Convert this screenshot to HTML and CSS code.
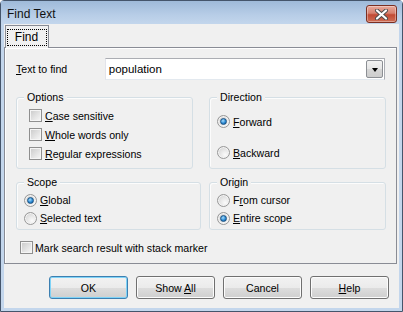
FILE: index.html
```html
<!DOCTYPE html>
<html>
<head>
    <title>Find Text</title>
    <link rel="stylesheet" href="styles.css">
</head>
<body>
    <div class="window">
        <div class="titlebar">
            <span class="title">Find Text</span>
            <button class="close-btn" title="Close">
                <svg width="15" height="11" viewBox="0 0 15 11">
                    <path d="M3 1.5 L12 9.5 M12 1.5 L3 9.5" stroke="#4a4a4a" stroke-width="4" stroke-linecap="round"/>
                    <path d="M3 1.5 L12 9.5 M12 1.5 L3 9.5" stroke="#ffffff" stroke-width="2.2" stroke-linecap="round"/>
                </svg>
            </button>
        </div>

        <div class="client">
            <div class="tabs">
                <div class="tab active"><span class="focus">Find</span></div>
            </div>

            <div class="panel">
                <div class="find-row">
                    <label class="find-label"><u>T</u>ext to find</label>
                    <div class="combo">
                        <span class="combo-text">population</span>
                        <span class="combo-btn"><span class="arrow"></span></span>
                    </div>
                </div>

                <div class="groups top-groups">
                    <div class="group options">
                        <span class="group-title">Options</span>
                        <div class="item"><span class="check"></span><span><u>C</u>ase sensitive</span></div>
                        <div class="item"><span class="check"></span><span><u>W</u>hole words only</span></div>
                        <div class="item"><span class="check"></span><span><u>R</u>egular expressions</span></div>
                    </div>
                    <div class="group direction">
                        <span class="group-title">Direction</span>
                        <div class="item"><span class="radio checked"></span><span><u>F</u>orward</span></div>
                        <div class="item"><span class="radio"></span><span><u>B</u>ackward</span></div>
                    </div>
                </div>

                <div class="groups bottom-groups">
                    <div class="group scope">
                        <span class="group-title">Scope</span>
                        <div class="item"><span class="radio checked"></span><span><u>G</u>lobal</span></div>
                        <div class="item"><span class="radio"></span><span><u>S</u>elected text</span></div>
                    </div>
                    <div class="group origin">
                        <span class="group-title">Origin</span>
                        <div class="item"><span class="radio"></span><span>F<u>r</u>om cursor</span></div>
                        <div class="item"><span class="radio checked"></span><span><u>E</u>ntire scope</span></div>
                    </div>
                </div>

                <div class="item mark"><span class="check"></span><span>Mark search result with stack marker</span></div>
            </div>

            <div class="buttons">
                <button class="btn default">OK</button>
                <button class="btn">Show <u>A</u>ll</button>
                <button class="btn">Cancel</button>
                <button class="btn"><u>H</u>elp</button>
            </div>
        </div>
    </div>
</body>
</html>
```

FILE: styles.css
```css
html, body {
    margin: 0;
    padding: 0;
}
body {
    font-family: "Liberation Sans", Arial, sans-serif;
    font-size: 10.6px;
    color: #000;
    width: 403px;
    height: 312px;
    overflow: hidden;
}
u {
    text-decoration: underline;
    text-underline-offset: 1px;
}

/* window frame */
.window {
    box-sizing: border-box;
    width: 403px;
    height: 312px;
    border: 1px solid #45556b;
    border-radius: 4px 4px 0 0;
    background: #c3d6ec;
    padding: 0 3px 3px 3px;
    display: flex;
    flex-direction: column;
}
.titlebar {
    height: 23px;
    margin: 0 -3px;
    padding: 0 5px 0 6px;
    display: flex;
    align-items: center;
    justify-content: space-between;
    background: linear-gradient(#9fbad9, #b7cde7 60%, #c3d6ec);
}
.title {
    font-size: 12px;
    color: #111;
    padding-top: 3px;
}
.close-btn {
    width: 31px;
    height: 18px;
    margin-top: 3px;
    padding: 0;
    border: 1px solid #7b2f22;
    border-radius: 3px;
    background: linear-gradient(#e9a99b, #d7806e 45%, #c24a34 55%, #cf6e55);
    box-shadow: inset 0 0 0 1px rgba(255,255,255,0.35);
    display: flex;
    align-items: center;
    justify-content: center;
}

/* client area */
.client {
    flex: 1;
    background: #f0f0f0;
    display: flex;
    flex-direction: column;
}
.tabs {
    display: flex;
    padding: 1px 0 0 1px;
}
.tab {
    width: 44px;
    height: 23px;
    box-sizing: border-box;
    border: 1px solid #898c95;
    border-bottom: none;
    background: #f0f0f0;
    margin-bottom: -1px;
    position: relative;
    z-index: 1;
    display: flex;
    align-items: center;
    justify-content: center;
}
.focus {
    outline: 1px dotted #000;
    padding: 1px 8px 1px 7px;
    line-height: 13px;
    font-size: 12px;
}
.panel {
    border: 1px solid #898c95;
    box-shadow: inset 1px 1px 0 #ffffff;
    margin-right: 2px;
    padding: 10px 11px 6px 11px;
}

.find-row {
    display: flex;
    align-items: center;
    height: 22px;
}
.find-label {
    width: 89px;
}
.combo {
    box-sizing: border-box;
    width: 281px;
    height: 22px;
    border: 1px solid #abadb3;
    border-left-color: #e2e3ea;
    border-bottom-color: #e3e9ef;
    background: #fff;
    display: flex;
    align-items: center;
    justify-content: space-between;
    padding: 0 1px 0 3px;
}
.combo-text {
    font-size: 11.5px;
}
.combo-btn {
    box-sizing: border-box;
    width: 17px;
    height: 18px;
    border: 1px solid #8c8f94;
    border-radius: 2px;
    background: linear-gradient(#f2f2f2, #e6e6e6 50%, #d6d6d6 51%, #cdcdcd);
    display: flex;
    align-items: center;
    justify-content: center;
}
.arrow {
    width: 0;
    height: 0;
    border-left: 3.5px solid transparent;
    border-right: 3.5px solid transparent;
    border-top: 4px solid #000;
    margin-top: 1px;
}

/* group boxes */
.groups {
    display: grid;
    align-items: stretch;
}
.top-groups {
    grid-template-columns: 177px 177px;
    column-gap: 16px;
    margin-top: 17px;
}
.bottom-groups {
    grid-template-columns: 185px 177px;
    column-gap: 8px;
    margin-top: 13px;
}
.group {
    position: relative;
    border: 1px solid #d5dfe5;
    border-radius: 3px;
    box-shadow: inset 1px 1px 0 #fcfcfc;
}
.group-title {
    position: absolute;
    top: -8px;
    left: 7px;
    padding: 0 3px;
    background: #f0f0f0;
    line-height: 14px;
}
.item {
    display: flex;
    align-items: center;
    gap: 3px;
    white-space: nowrap;
}
.options {
    padding: 8px 0 5px 12px;
}
.options .item {
    height: 19px;
}
.direction {
    padding: 14px 0 6px 7px;
    display: flex;
    flex-direction: column;
    gap: 12px;
}
.direction .item {
    height: 19px;
}
.scope, .origin {
    padding: 8px 0 2px 7px;
}
.scope .item, .origin .item {
    height: 18px;
}
.mark {
    height: 19px;
    margin-top: 8px;
    padding-left: 4px;
    gap: 2px;
}

/* check boxes and radios */
.check {
    box-sizing: border-box;
    width: 13px;
    height: 13px;
    flex: none;
    border: 1px solid #8f8f8f;
    box-shadow: inset 0 0 0 1px #f5f5f5;
    background: linear-gradient(135deg, #c9c9c9, #e6e6e6 60%, #f8f8f8);
}
.radio {
    box-sizing: border-box;
    width: 13px;
    height: 13px;
    flex: none;
    border-radius: 50%;
    border: 1px solid #989898;
    background: radial-gradient(circle at 65% 70%, #fbfbfb, #e2e2e2 55%, #c4c4c4);
    box-shadow: inset 0 0 0 1px #f4f4f4;
    display: flex;
    align-items: center;
    justify-content: center;
}
.radio.checked::after {
    content: "";
    width: 5px;
    height: 5px;
    border-radius: 50%;
    border: 1px solid #1c5180;
    background: radial-gradient(circle at 40% 35%, #a8dcfb, #2a8ad4 55%, #0f4f8f);
}

/* buttons */
.buttons {
    display: flex;
    justify-content: flex-end;
    gap: 8px;
    padding: 12px 10px 0 0;
}
.btn {
    font-family: "Liberation Sans", Arial, sans-serif;
    font-size: 10.6px;
    color: #000;
    width: 79px;
    height: 23px;
    padding: 0;
    border: 1px solid #707070;
    border-radius: 3px;
    background: linear-gradient(#f2f2f2, #ebebeb 50%, #dddddd 51%, #cfcfcf);
    box-shadow: inset 0 0 0 1px #fcfcfc;
}
.btn.default {
    border-color: #3c7fb1;
    box-shadow: inset 0 0 0 1px #7fd3f7;
}
```
